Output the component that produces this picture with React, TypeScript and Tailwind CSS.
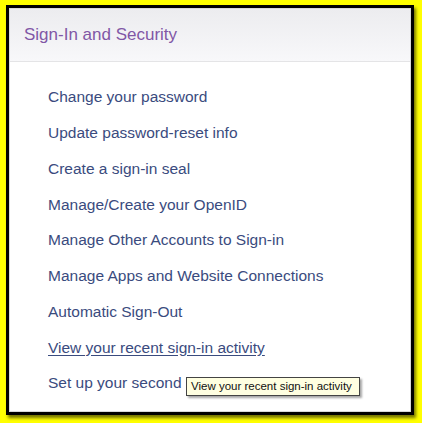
const links = [
  "Change your password",
  "Update password-reset info",
  "Create a sign-in seal",
  "Manage/Create your OpenID",
  "Manage Other Accounts to Sign-in",
  "Manage Apps and Website Connections",
  "Automatic Sign-Out",
  "View your recent sign-in activity",
  "Set up your second",
];

export default function App() {
  return (
    <div className="w-[422px] h-[423px] bg-[#ffff00] pt-[5px] pl-[6px] font-['Liberation_Sans',Arial,sans-serif]">
      <div className="relative w-[408px] h-[410px] border-[3px] border-black bg-white shadow-[2px_3px_3px_rgba(0,0,0,0.55)]">
        <div className="h-full border border-[#d8d8d8] flex flex-col">
          <div className="h-[53px] shrink-0 flex items-center pl-[14px] border-b border-[#e4e4e6] bg-gradient-to-b from-[#ececef] to-[#f8f8fa]">
            <span className="text-[17px] text-[#8157a6]">
              Sign-In and Security
            </span>
          </div>
          <ul className="pt-[17px] pl-[38px]">
            {links.map((label, i) => (
              <li
                key={label}
                className={`h-[35.75px] flex items-center text-[15.5px] text-[#3a4b7e] ${
                  i === 7 ? "underline underline-offset-2" : ""
                }`}
              >
                {label}
              </li>
            ))}
          </ul>
        </div>

        {/* hover tooltip */}
        <div className="absolute left-[177px] top-[369px] h-[19px] w-[174px] flex items-center px-[4px] bg-[#ffffe1] border border-[#444] shadow-[2px_2px_2px_rgba(0,0,0,0.35)] text-[11.5px] text-[#111] whitespace-nowrap">
          View your recent sign-in activity
        </div>
      </div>
    </div>
  );
}
